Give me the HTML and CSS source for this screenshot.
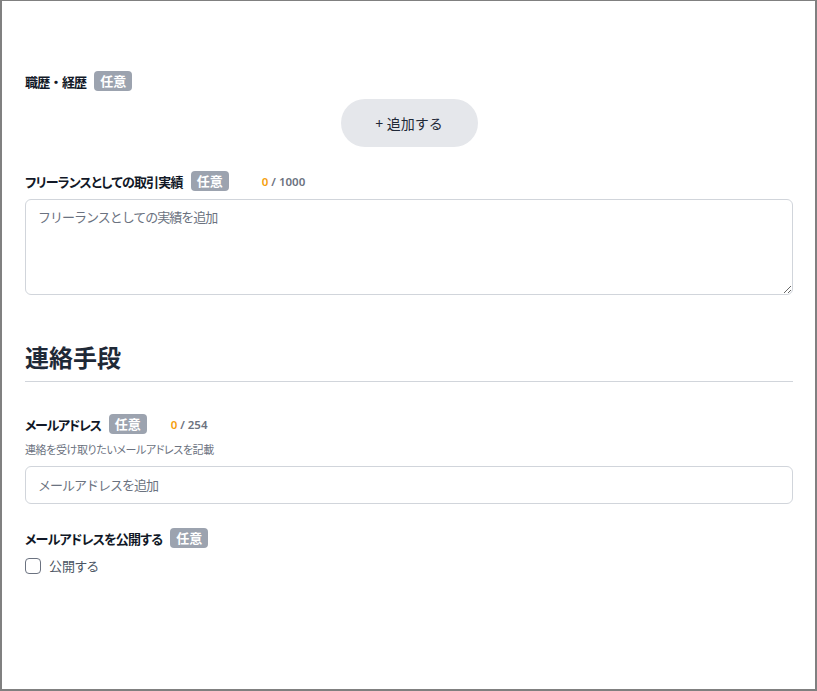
FILE: index.html
```html
<!DOCTYPE html>
<html lang="ja">
<head>
  <meta charset="utf-8">
  <title>プロフィール編集</title>
  <link rel="stylesheet" href="styles.css">
</head>
<body>
  <div class="frame">
    <!-- 職歴 -->
    <div class="field first">
      <div class="label-row">
        <span class="label">職歴<span class="dot">・</span>経歴</span>
        <span class="badge">任意</span>
      </div>
      <div class="add-wrap">
        <button type="button" class="add-btn">+ 追加する</button>
      </div>
    </div>

    <!-- 取引実績 -->
    <div class="field mt24">
      <div class="label-row">
        <span class="label">フリーランスとしての取引実績</span>
        <span class="badge">任意</span>
        <span class="counter wide"><em>0</em> / 1000</span>
      </div>
      <textarea class="textarea" placeholder="フリーランスとしての実績を追加"></textarea>
    </div>

    <h2 class="section-title">連絡手段</h2>

    <div class="field mt32">
      <div class="label-row">
        <span class="label kana">メールアドレス</span>
        <span class="badge">任意</span>
        <span class="counter"><em>0</em> / 254</span>
      </div>
      <p class="help">連絡を受け取りたいメールアドレスを記載</p>
      <input type="text" class="input" placeholder="メールアドレスを追加">
    </div>

    <div class="field mt24">
      <div class="label-row">
        <span class="label">メールアドレスを公開する</span>
        <span class="badge">任意</span>
      </div>
      <label class="check">
        <input type="checkbox">
        <span>公開する</span>
      </label>
    </div>
  </div>
</body>
</html>
```

FILE: styles.css
```css
* { box-sizing: border-box; }

html, body {
  margin: 0;
  background: #fff;
}

body {
  font-family: "Noto Sans", "Noto Sans CJK JP", sans-serif;
  color: #111827;
  font-feature-settings: "palt";
}

/* 外枠 */
.frame {
  height: 691px;
  border-style: solid;
  border-color: #808080;
  border-width: 1px 2px 2px 2px;
  padding: 70px 22px 0 23px;
}

.mt24 { margin-top: 24px; }
.mt32 { margin-top: 32px; }

/* ラベル行 */
.label-row {
  display: flex;
  align-items: center;
  gap: 8px;
  height: 20px;
}
.label {
  font-size: 13px;
  font-weight: bold;
  letter-spacing: -0.8px;
  color: #111827;
}
.label.kana { letter-spacing: -1.3px; }
.label .dot { font-feature-settings: normal; letter-spacing: -0.5px; }
.badge {
  display: inline-block;
  height: 20px;
  line-height: 20px;
  padding: 0 6px;
  border-radius: 4px;
  background-color: #9ca3af;
  color: #fff;
  font-size: 13px;
  font-weight: bold;
}
.counter {
  margin-left: 16px;
  font-size: 11.5px;
  font-weight: 600;
  color: #6b7280;
}
.counter.wide { margin-left: 25px; }
.counter em {
  font-style: normal;
  color: #f59e0b;
}

/* 追加ボタン */
.add-wrap {
  display: flex;
  justify-content: center;
  margin-top: 8px;
}
.add-btn {
  width: 137px;
  height: 48px;
  border: none;
  border-radius: 24px;
  background-color: #e5e7eb;
  color: #1f2937;
  font-family: inherit;
  font-size: 14px;
}

/* 入力欄 */
.textarea, .input {
  display: block;
  width: 100%;
  margin-top: 8px;
  border: 1px solid #d1d5db;
  border-radius: 6px;
  font-family: inherit;
  font-size: 13px;
  letter-spacing: -1px;
  color: #111827;
}
.textarea {
  height: 96px;
  padding: 7px 12px;
  line-height: 20px;
}
.input {
  height: 38px;
  padding: 0 12px;
}
.textarea::placeholder, .input::placeholder { color: #6b7280; }

/* 見出し */
.section-title {
  margin: 45px 0 0;
  padding-bottom: 5px;
  border-bottom: 1px solid #d1d5db;
  font-size: 24px;
  line-height: 36px;
  font-weight: bold;
  color: #1f2937;
}

.help {
  margin: 8px 0 0;
  font-size: 11px;
  line-height: 16px;
  letter-spacing: -0.4px;
  color: #6b7280;
}

/* チェックボックス */
.check {
  display: flex;
  align-items: center;
  gap: 8px;
  margin-top: 8px;
  font-size: 13px;
  color: #4b5563;
}
.check input {
  appearance: none;
  margin: 0;
  width: 16px;
  height: 16px;
  border: 1.5px solid #6b7280;
  border-radius: 4px;
  background: #fff;
}
```
